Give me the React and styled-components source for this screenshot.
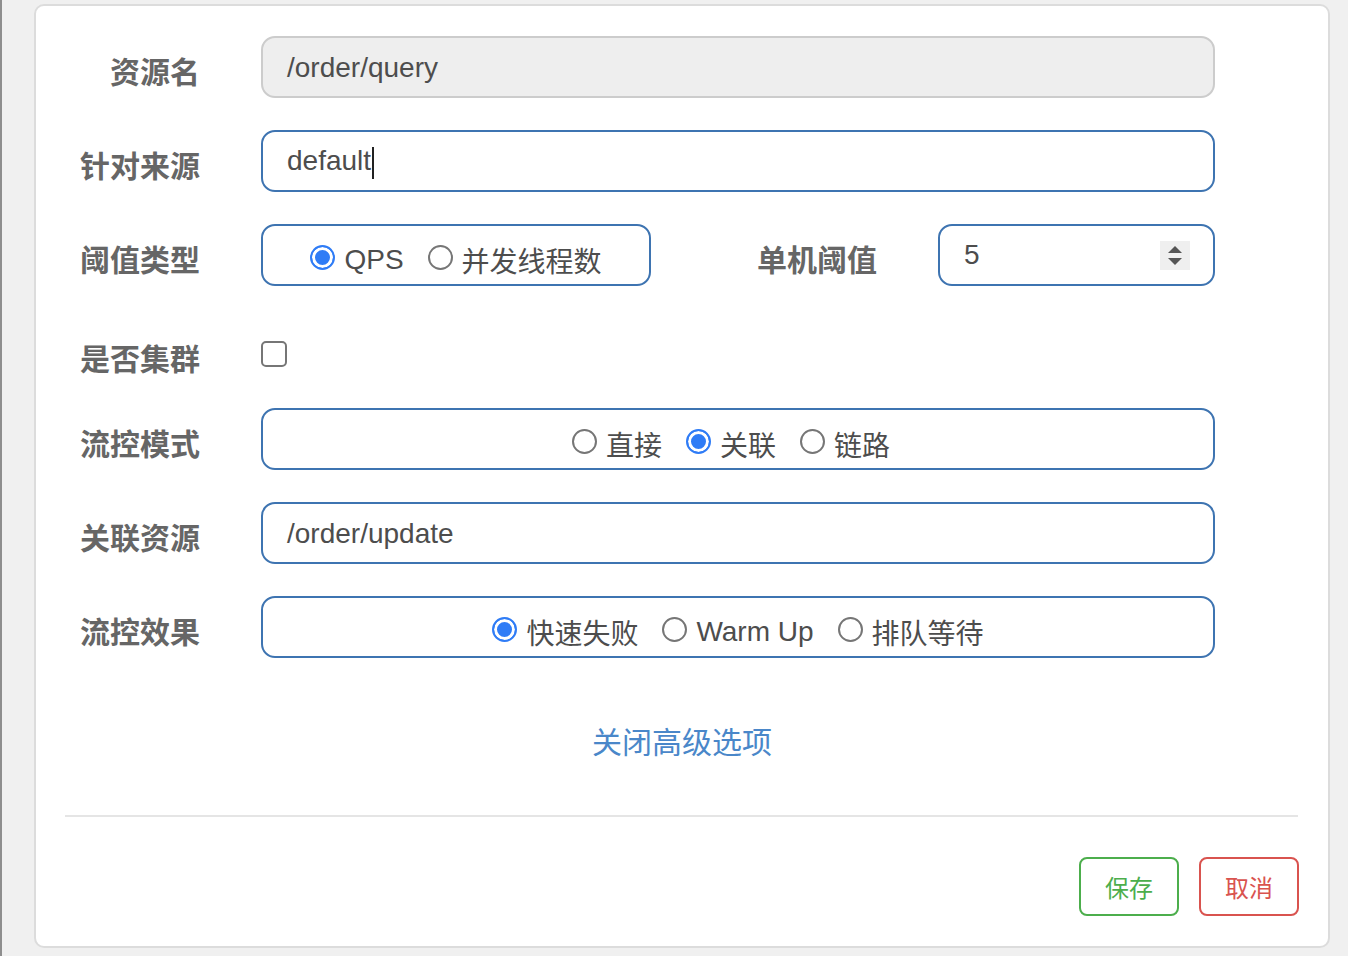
import React from "react";
import styled, { createGlobalStyle } from "styled-components";

const GlobalStyle = createGlobalStyle`
  html, body {
    margin: 0;
    padding: 0;
    background: #f0f0f0;
  }
  body {
    font-family: "Liberation Sans", "Noto Sans CJK SC", sans-serif;
  }
`;

const Page = styled.div`
  box-sizing: border-box;
  min-height: 956px;
  border-left: 2px solid #8e8e8e;
  padding: 4px 18px 8px 32px;
`;

const Card = styled.div`
  box-sizing: border-box;
  width: 1296px;
  height: 944px;
  background: #fff;
  border: 2px solid #dcdcdc;
  border-radius: 10px;
  display: flex;
  flex-direction: column;
`;

const Body = styled.div`
  padding: 30px 113px 0 0;
  display: flex;
  flex-direction: column;
  gap: 32px;
`;

const Row = styled.div`
  display: flex;
  align-items: center;
  height: ${({ $h }) => $h || 62}px;
  padding-top: ${({ $pt }) => $pt || 0}px;
  box-sizing: border-box;
`;

const Label = styled.div`
  width: 164px;
  margin-right: 61px;
  padding-top: 5px;
  flex-shrink: 0;
  text-align: right;
  font-size: 30px;
  font-weight: bold;
  color: #666;
  white-space: nowrap;
`;

const InlineLabel = styled(Label)`
  width: auto;
  flex: 1;
`;

const Field = styled.div`
  flex: 1;
  display: flex;
  align-items: center;
  height: 100%;
`;

const TextBox = styled.div`
  box-sizing: border-box;
  flex: 1;
  height: 62px;
  display: flex;
  align-items: center;
  padding: 2px 23px 0 24px;
  border: 2px solid ${({ $readOnly }) => ($readOnly ? "#cccccc" : "#3e74b1")};
  background: ${({ $readOnly }) => ($readOnly ? "#eeeeee" : "#fff")};
  border-radius: 14px;
  font-size: 28px;
  color: #4d4d4d;
`;

const NumberBox = styled(TextBox)`
  flex: none;
  width: 277px;
  justify-content: space-between;
  padding-top: 0;
`;

const Caret = styled.span`
  display: inline-block;
  width: 2px;
  height: 32px;
  background: #222;
  margin-left: 1px;
  vertical-align: middle;
`;

const Spinner = styled.div`
  width: 30px;
  height: 29px;
  background: #efefef;
  display: flex;
  flex-direction: column;
  align-items: center;
  justify-content: center;
  gap: 5px;
`;

const Arrow = styled.span`
  width: 0;
  height: 0;
  border-left: 7px solid transparent;
  border-right: 7px solid transparent;
  ${({ $up }) =>
    $up ? "border-bottom: 7px solid #555;" : "border-top: 7px solid #555;"}
`;

const RadioBox = styled(TextBox)`
  flex: ${({ $w }) => ($w ? "none" : 1)};
  width: ${({ $w }) => ($w ? `${$w}px` : "auto")};
  justify-content: center;
  padding: 0 ${({ $pr }) => $pr || 0}px 0 0;
`;

const RadioItem = styled.label`
  display: flex;
  align-items: center;
  margin-right: ${({ $last }) => ($last ? 0 : 24)}px;
  padding-top: 10px;
  font-size: 28px;
  color: #4d4d4d;
  white-space: nowrap;
`;

const Dot = styled.span`
  box-sizing: border-box;
  width: 25px;
  height: 25px;
  margin-right: 9px;
  border-radius: 50%;
  margin-top: -6px;
  border: 2px solid ${({ $on }) => ($on ? "#2f7cf6" : "#767676")};
  background: ${({ $on }) => ($on ? "#2f7cf6" : "#fff")};
  box-shadow: ${({ $on }) => ($on ? "inset 0 0 0 3px #fff" : "none")};
`;

const Check = styled.span`
  box-sizing: border-box;
  width: 26px;
  height: 26px;
  border: 2px solid #767676;
  border-radius: 5px;
  background: #fff;
`;

const LinkRow = styled.div`
  margin-top: 70px;
  text-align: center;
  font-size: 30px;
  line-height: 30px;
  color: #4a87c9;
  cursor: pointer;
`;

const Divider = styled.div`
  height: 2px;
  background: #e5e5e5;
  margin: 57px 30px 0 29px;
`;

const Footer = styled.div`
  display: flex;
  justify-content: flex-end;
  gap: 20px;
  padding: 40px 29px 0 0;
`;

const Button = styled.button`
  box-sizing: border-box;
  width: 100px;
  height: 59px;
  border-radius: 8px;
  border: 2px solid ${({ $c }) => $c};
  color: ${({ $c }) => $c};
  background: #fff;
  font-family: inherit;
  font-size: 24px;
  cursor: pointer;
`;

const Radio = ({ on, last, children }) => (
  <RadioItem $last={last}>
    <Dot $on={on} />
    {children}
  </RadioItem>
);

export default function App() {
  return (
    <>
      <GlobalStyle />
      <Page>
        <Card>
          <Body>
            <Row>
              <Label>资源名</Label>
              <Field>
                <TextBox $readOnly>/order/query</TextBox>
              </Field>
            </Row>
            <Row>
              <Label>针对来源</Label>
              <Field>
                <TextBox>
                  <span>
                    default
                    <Caret />
                  </span>
                </TextBox>
              </Field>
            </Row>
            <Row>
              <Label>阈值类型</Label>
              <Field>
                <RadioBox $w={390}>
                  <Radio on>QPS</Radio>
                  <Radio last>并发线程数</Radio>
                </RadioBox>
                <InlineLabel>单机阈值</InlineLabel>
                <NumberBox>
                  <span>5</span>
                  <Spinner>
                    <Arrow $up />
                    <Arrow />
                  </Spinner>
                </NumberBox>
              </Field>
            </Row>
            <Row $h={58} $pt={14}>
              <Label>是否集群</Label>
              <Field>
                <Check />
              </Field>
            </Row>
            <Row>
              <Label>流控模式</Label>
              <Field>
                <RadioBox $pr={14}>
                  <Radio>直接</Radio>
                  <Radio on>关联</Radio>
                  <Radio last>链路</Radio>
                </RadioBox>
              </Field>
            </Row>
            <Row>
              <Label>关联资源</Label>
              <Field>
                <TextBox>/order/update</TextBox>
              </Field>
            </Row>
            <Row>
              <Label>流控效果</Label>
              <Field>
                <RadioBox>
                  <Radio on>快速失败</Radio>
                  <Radio>Warm Up</Radio>
                  <Radio last>排队等待</Radio>
                </RadioBox>
              </Field>
            </Row>
          </Body>
          <LinkRow>关闭高级选项</LinkRow>
          <Divider />
          <Footer>
            <Button $c="#4cae4c">保存</Button>
            <Button $c="#d9534f">取消</Button>
          </Footer>
        </Card>
      </Page>
    </>
  );
}
